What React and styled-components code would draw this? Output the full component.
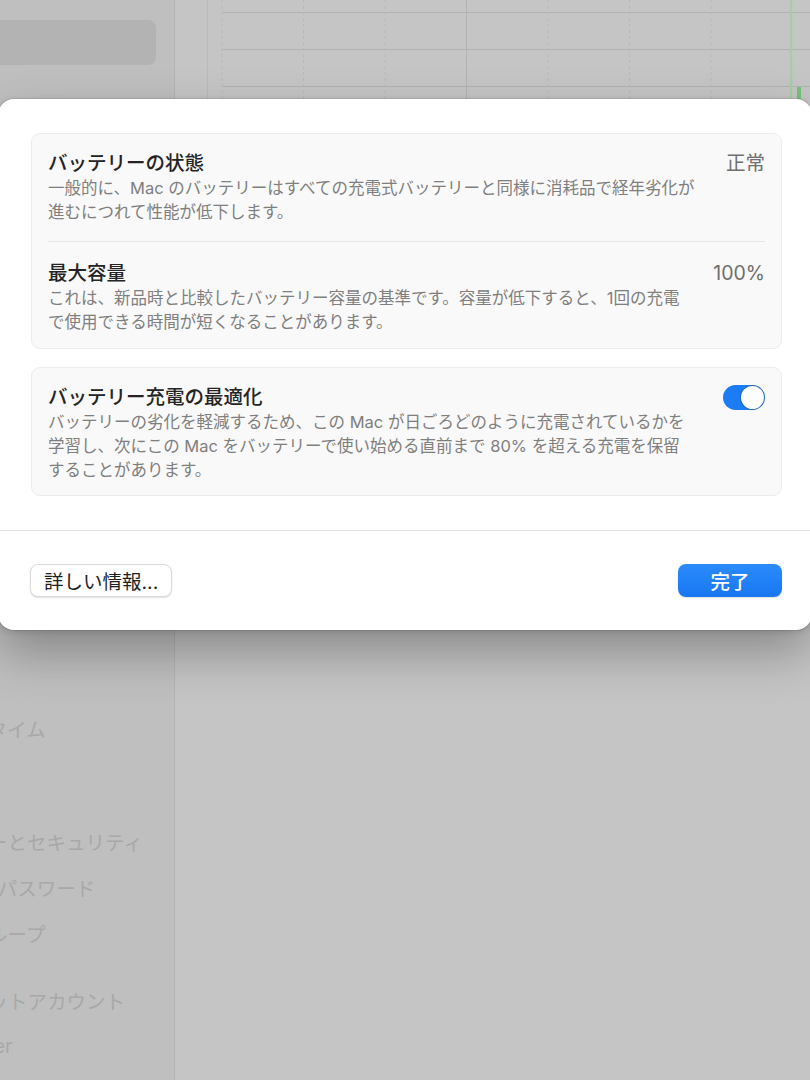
import React from "react";
import styled, { createGlobalStyle } from "styled-components";

const GlobalStyle = createGlobalStyle`
  html, body {
    margin: 0;
    padding: 0;
  }
  body {
    background: #c4c4c4;
    font-family: "Inter", "Noto Sans CJK JP", sans-serif;
    -webkit-font-smoothing: antialiased;
  }
`;

const Screen = styled.div`
  position: relative;
  width: 810px;
  height: 1080px;
  overflow: hidden;
  display: grid;
  grid-template-columns: 175px 1fr;
`;

const Sidebar = styled.aside`
  background: #bfbfbf;
  border-right: 1px solid #b4b4b4;
  overflow: hidden;
`;

const NavList = styled.nav`
  margin-left: -120px;
  width: 276px;
  padding-top: 20px;
  display: flex;
  flex-direction: column;
`;

const NavGroup = styled.div`
  display: flex;
  flex-direction: column;
  margin-top: ${(p) => (p.$first ? 0 : 21)}px;
`;

const NavItem = styled.div`
  height: ${(p) => (p.$selected ? 45 : 46)}px;
  display: flex;
  align-items: center;
  padding-left: 11px;
  border-radius: 8px;
  background: ${(p) => (p.$selected ? "#b3b3b3" : "transparent")};
  color: #a8a8a8;
  font-size: 19.5px;
  white-space: nowrap;
`;

const Main = styled.main`
  background: #c5c5c5;
  display: flex;
  flex-direction: column;
`;

const ChartArea = styled.div`
  padding-left: 32px;
  display: flex;
`;

const Sheet = styled.section`
  position: absolute;
  top: 99px;
  left: -2px;
  right: -2px;
  height: 531px;
  background: #ffffff;
  border-radius: 16px;
  box-shadow: 0 0 0 1px rgba(0, 0, 0, 0.08), 0 2px 6px rgba(0, 0, 0, 0.12),
    0 22px 50px rgba(0, 0, 0, 0.3);
  display: flex;
  flex-direction: column;
`;

const SheetBody = styled.div`
  padding: 34px 30px 34px 33px;
  display: flex;
  flex-direction: column;
  gap: 18px;
`;

const Card = styled.div`
  background: #f9f9f9;
  border: 1px solid #ececec;
  border-radius: 9px;
`;

const Row = styled.div`
  display: grid;
  grid-template-columns: 1fr auto;
  column-gap: 20px;
  padding: ${(p) => p.$pad};
`;

const Divider = styled.div`
  height: 1px;
  margin: 0 16px;
  background: #e6e6e6;
`;

const Title = styled.div`
  font-size: 19.5px;
  line-height: 26px;
  font-weight: 500;
  color: #242424;
`;

const Desc = styled.div`
  font-size: 16.5px;
  line-height: 24px;
  color: #7f7f7f;
  white-space: nowrap;
`;

const Value = styled.div`
  font-size: 19.5px;
  line-height: 26px;
  color: #6f6f6f;
  text-align: right;
`;

const Switch = styled.div`
  width: 42px;
  height: 25px;
  border-radius: 13px;
  background: #1b7cf4;
  display: flex;
  align-items: center;
  justify-content: flex-end;
  padding: 0 1px;
  box-sizing: border-box;
  margin-top: 1px;
`;

const Knob = styled.div`
  width: 23px;
  height: 23px;
  border-radius: 50%;
  background: #ffffff;
  box-shadow: 0 0 0 1px rgba(40, 60, 90, 0.35);
`;

const Footer = styled.footer`
  border-top: 1px solid #e3e3e3;
  padding: 33px 30px 33px 32px;
  display: flex;
  justify-content: space-between;
  align-items: center;
`;

const Button = styled.button`
  height: 33px;
  min-width: ${(p) => (p.$primary ? 104 : 141)}px;
  padding: 0 13px;
  border-radius: 8px;
  font-family: "Inter", "Noto Sans CJK JP", sans-serif;
  font-size: 19.5px;
  font-weight: ${(p) => (p.$primary ? 500 : 400)};
  color: ${(p) => (p.$primary ? "#ffffff" : "#1f1f1f")};
  background: ${(p) =>
    p.$primary ? "linear-gradient(#2b8bfc, #1877f1)" : "#ffffff"};
  border: ${(p) => (p.$primary ? "none" : "1px solid #dcdcdc")};
  box-shadow: 0 1px 1.5px rgba(0, 0, 0, 0.13);
  display: flex;
  align-items: center;
  justify-content: center;
`;

const navGroups = [
  { first: true, items: ["バッテリー"], selected: 0 },
  {
    items: [
      "一般",
      "アクセシビリティ",
      "外観",
      "コントロールセンター",
      "Siri と Spotlight",
      "デスクトップと Dock",
      "ディスプレイ",
      "壁紙",
      "スクリーンセーバ",
      "省エネルギー",
    ],
  },
  { items: ["通知", "サウンド", "集中モード", "スクリーンタイム"] },
  {
    items: [
      "ロック画面",
      "プライバシーとセキュリティ",
      "Touch ID とパスワード",
      "ユーザとグループ",
    ],
  },
  { items: ["インターネットアカウント", "Game Center", "ウォレットと Apple Pay"] },
];

const Chart = () => {
  const cols = [15, 96.5, 178, 259.5, 341, 422.5, 504];
  const rows = [12, 49, 86, 123, 160, 197];
  return (
    <svg width="603" height="220" viewBox="0 0 603 220">
      <line x1="0.5" y1="0" x2="0.5" y2="220" stroke="#bbbbbb" />
      {rows.map((y) => (
        <line key={y} x1="15" y1={y + 0.5} x2="603" y2={y + 0.5} stroke="#b2b2b2" />
      ))}
      {cols.map((x, i) => (
        <line
          key={x}
          x1={x}
          y1="0"
          x2={x}
          y2="220"
          stroke={i === 3 ? "#b3b3b3" : "#b9b9b9"}
          strokeDasharray={i === 3 ? "none" : "3 3"}
        />
      ))}
      <line x1="584" y1="0" x2="584" y2="220" stroke="#a6cda6" strokeWidth="2.5" />
      <rect x="590" y="87" width="4" height="12" fill="#77c077" />
    </svg>
  );
};

export default function App() {
  return (
    <>
      <GlobalStyle />
      <Screen>
        <Sidebar>
          <NavList>
            {navGroups.map((g, gi) => (
              <NavGroup key={gi} $first={g.first}>
                {g.items.map((label, i) => (
                  <NavItem key={label} $selected={g.selected === i}>
                    {label}
                  </NavItem>
                ))}
              </NavGroup>
            ))}
          </NavList>
        </Sidebar>
        <Main>
          <ChartArea>
            <Chart />
          </ChartArea>
        </Main>

        <Sheet>
          <SheetBody>
            <Card>
              <Row $pad="16px 16px 17px">
                <div>
                  <Title>バッテリーの状態</Title>
                  <Desc>
                    一般的に、Mac のバッテリーはすべての充電式バッテリーと同様に消耗品で経年劣化が
                    <br />
                    進むにつれて性能が低下します。
                  </Desc>
                </div>
                <Value>正常</Value>
              </Row>
              <Divider />
              <Row $pad="18px 16px 14px">
                <div>
                  <Title>最大容量</Title>
                  <Desc>
                    これは、新品時と比較したバッテリー容量の基準です。容量が低下すると、1回の充電
                    <br />
                    で使用できる時間が短くなることがあります。
                  </Desc>
                </div>
                <Value>100%</Value>
              </Row>
            </Card>
            <Card>
              <Row $pad="16px 16px 13px">
                <div>
                  <Title>バッテリー充電の最適化</Title>
                  <Desc>
                    バッテリーの劣化を軽減するため、この Mac が日ごろどのように充電されているかを
                    <br />
                    学習し、次にこの Mac をバッテリーで使い始める直前まで 80% を超える充電を保留
                    <br />
                    することがあります。
                  </Desc>
                </div>
                <Switch>
                  <Knob />
                </Switch>
              </Row>
            </Card>
          </SheetBody>
          <Footer>
            <Button>詳しい情報...</Button>
            <Button $primary>完了</Button>
          </Footer>
        </Sheet>
      </Screen>
    </>
  );
}
